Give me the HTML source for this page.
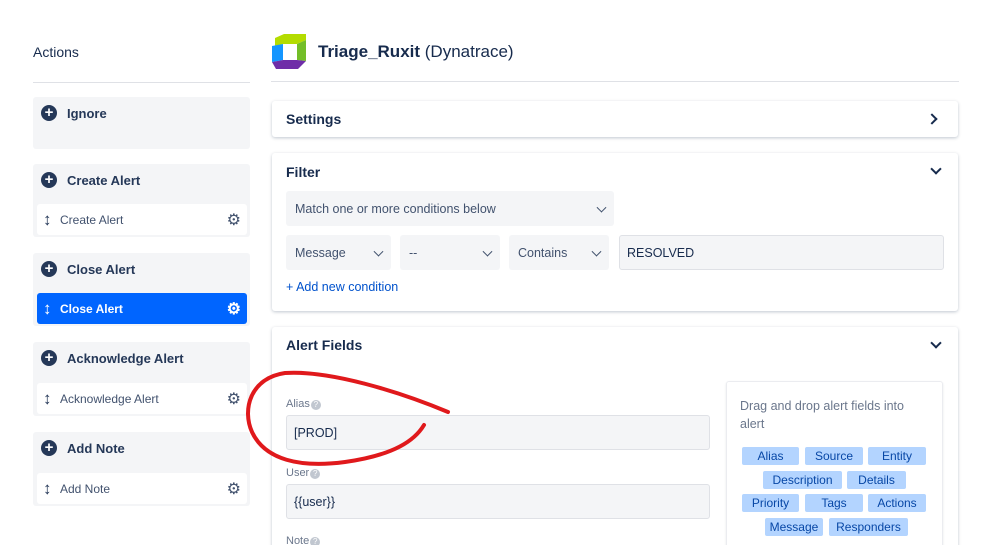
<!DOCTYPE html><html><head><style>
*{box-sizing:border-box;margin:0;padding:0}
html,body{width:998px;height:545px;overflow:hidden}
body{background:#fff;font-family:"Liberation Sans",sans-serif;color:#172b4d;position:relative}
.a{position:absolute}
.grp{position:absolute;left:33px;width:217px;background:#f4f5f7;border-radius:3px}
.gh{position:absolute;left:8px;top:8px;font-size:13px;font-weight:bold;display:flex;align-items:center;gap:10px;color:#253858}
.pl{width:16px;height:16px;border-radius:50%;background:#253858;color:#fff;font-size:15px;line-height:16px;text-align:center;font-weight:bold}
.row{position:absolute;left:4px;width:210px;height:31px;background:#fff;border-radius:3px;font-size:12px;color:#42526e;display:flex;align-items:center;padding-left:6px}
.row .ar{font-size:17px;width:17px;font-weight:bold;color:#253858}
.row .g{position:absolute;right:6px;top:6px;font-size:16px;color:#42526e}
.blue{background:#0065ff;font-weight:bold}
.blue,.blue .ar,.blue .g{color:#fff}
.card{position:absolute;left:272px;width:686px;background:#fff;border-radius:3px;box-shadow:0 1px 3px rgba(9,30,66,.25)}
.ct{position:absolute;left:14px;font-size:14px;font-weight:bold;color:#172b4d}
.sel{position:absolute;background:#f4f5f7;border-radius:3px;font-size:12.5px;color:#42526e;padding-left:9px;display:flex;align-items:center}
.sel .cv{position:absolute;right:9px;top:50%;width:7px;height:7px;border-right:1.5px solid #42526e;border-bottom:1.5px solid #42526e;transform:translateY(-70%) rotate(45deg)}
.inp{position:absolute;left:286px;width:424px;height:35px;background:#f4f5f7;border:1px solid #dfe1e6;border-radius:3px;font-size:12.5px;color:#172b4d;padding-left:7px;display:flex;align-items:center}
.lbl{position:absolute;left:286px;font-size:11px;color:#6b778c}
.q{display:inline-block;width:10px;height:10px;border-radius:50%;background:#c1c7d0;color:#fff;font-size:8px;text-align:center;line-height:10px;margin-left:1px}
.tag{position:absolute;height:18px;background:#b3d4ff;color:#0747a6;font-size:12px;text-align:center;line-height:18px;border-radius:2px}
</style></head><body>
<div class="a" style="left:33px;top:44px;font-size:14px;color:#172b4d">Actions</div>
<div class="a" style="left:33px;top:82px;width:217px;height:1px;background:#dfe1e6"></div>

<div class="grp" style="top:97px;height:52px"><div class="gh"><span class="pl">+</span>Ignore</div></div>
<div class="grp" style="top:164px;height:73px"><div class="gh"><span class="pl">+</span>Create Alert</div>
<div class="row" style="top:40px"><span class="ar">↕</span>Create Alert<span class="g">⚙</span></div></div>
<div class="grp" style="top:253px;height:73px"><div class="gh"><span class="pl">+</span>Close Alert</div>
<div class="row blue" style="top:40px"><span class="ar">↕</span>Close Alert<span class="g">⚙</span></div></div>
<div class="grp" style="top:342px;height:74px"><div class="gh"><span class="pl">+</span>Acknowledge Alert</div>
<div class="row" style="top:41px"><span class="ar">↕</span>Acknowledge Alert<span class="g">⚙</span></div></div>
<div class="grp" style="top:432px;height:74px"><div class="gh"><span class="pl">+</span>Add Note</div>
<div class="row" style="top:41px"><span class="ar">↕</span>Add Note<span class="g">⚙</span></div></div>

<svg class="a" style="left:271px;top:33px" width="37" height="37" viewBox="0 0 37 37">
<polygon points="4,5 13,1 35,1 35,7 26,11 12,11 4,13" fill="#b4dc00"/>
<polygon points="1,13 12,11 12,27 1,29" fill="#1496ff"/>
<polygon points="26,11 35,7 35,28 26,27" fill="#73be28"/>
<polygon points="12,27 26,27 35,28 27,36 5,36 1,29" fill="#6f2da8"/>
<rect x="12" y="11" width="14" height="16" fill="#fff"/>
</svg>
<div class="a" style="left:318px;top:42px;font-size:17px"><b>Triage_Ruxit</b> (Dynatrace)</div>
<div class="a" style="left:271px;top:81px;width:688px;height:1px;background:#dfe1e6"></div>

<div class="card" style="top:101px;height:36px"><div class="ct" style="top:10px">Settings</div>
<div class="a" style="right:22px;top:14px;width:8px;height:8px;border-right:2px solid #172b4d;border-top:2px solid #172b4d;transform:rotate(45deg)"></div></div>

<div class="card" style="top:153px;height:158px"><div class="ct" style="top:11px">Filter</div>
<div class="a" style="right:18px;top:12px;width:8px;height:8px;border-right:2px solid #172b4d;border-bottom:2px solid #172b4d;transform:rotate(45deg)"></div></div>
<div class="sel" style="left:286px;top:191px;width:328px;height:35px">Match one or more conditions below<span class="cv"></span></div>
<div class="sel" style="left:286px;top:235px;width:105px;height:35px">Message<span class="cv"></span></div>
<div class="sel" style="left:400px;top:235px;width:100px;height:35px">--<span class="cv"></span></div>
<div class="sel" style="left:509px;top:235px;width:100px;height:35px">Contains<span class="cv"></span></div>
<div class="inp" style="left:619px;top:235px;width:325px;color:#172b4d">RESOLVED</div>
<div class="a" style="left:286px;top:280px;font-size:12.5px;color:#0052cc">+ Add new condition</div>

<div class="card" style="top:327px;height:240px"><div class="ct" style="top:10px">Alert Fields</div>
<div class="a" style="right:18px;top:12px;width:8px;height:8px;border-right:2px solid #172b4d;border-bottom:2px solid #172b4d;transform:rotate(45deg)"></div></div>
<div class="lbl" style="top:398px">Alias<span class="q">?</span></div>
<div class="inp" style="top:415px">[PROD]</div>
<div class="lbl" style="top:467px">User<span class="q">?</span></div>
<div class="inp" style="top:484px">{{user}}</div>
<div class="lbl" style="top:535px">Note<span class="q">?</span></div>

<div class="a" style="left:726px;top:381px;width:217px;height:190px;border:1px solid #ebecf0;border-radius:3px;box-shadow:0 1px 2px rgba(9,30,66,.1)"></div>
<div class="a" style="left:740px;top:397px;width:190px;font-size:12.5px;color:#6b778c;line-height:18px">Drag and drop alert fields into alert</div>
<div class="tag" style="left:742px;top:447px;width:57px">Alias</div>
<div class="tag" style="left:805px;top:447px;width:58px">Source</div>
<div class="tag" style="left:868px;top:447px;width:58px">Entity</div>
<div class="tag" style="left:763px;top:471px;width:79px">Description</div>
<div class="tag" style="left:847px;top:471px;width:59px">Details</div>
<div class="tag" style="left:742px;top:494px;width:57px">Priority</div>
<div class="tag" style="left:805px;top:494px;width:58px">Tags</div>
<div class="tag" style="left:868px;top:494px;width:58px">Actions</div>
<div class="tag" style="left:765px;top:518px;width:58px">Message</div>
<div class="tag" style="left:829px;top:518px;width:79px">Responders</div>

<svg class="a" style="left:0;top:0" width="998" height="545">
<path d="M448,412 C400,392 330,370 285,373 C250,378 242,410 252,432 C265,460 300,468 345,462 C395,455 415,440 424,425" fill="none" stroke="#e0191c" stroke-width="4" stroke-linecap="round"/>
</svg>
</body></html>
